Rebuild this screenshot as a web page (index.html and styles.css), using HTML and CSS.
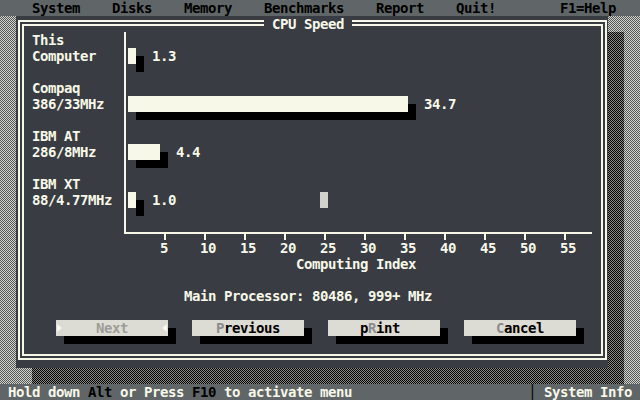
FILE: index.html
```html
<!DOCTYPE html>
<html lang="en">
<head>
<meta charset="utf-8">
<title>System Info - CPU Speed</title>
<link rel="stylesheet" href="styles.css">
</head>
<body>
<div class="screen">
  <nav class="menubar">
    <span>System</span>
    <span>Disks</span>
    <span>Memory</span>
    <span>Benchmarks</span>
    <span>Report</span>
    <span>Quit!</span>
    <span class="help">F1=Help</span>
  </nav>

  <main class="desktop">
    <section class="dialog">
      <div class="frame">
        <h1 class="title">CPU Speed</h1>

        <div class="chart">
          <div class="labels">
            <div class="label">This<br>Computer</div>
            <div class="label">Compaq<br>386/33MHz</div>
            <div class="label">IBM AT<br>286/8MHz</div>
            <div class="label">IBM XT<br>88/4.77MHz</div>
          </div>
          <div class="plot">
            <div class="series"><span class="bar" style="width:8px"></span><span class="value">1.3</span></div>
            <div class="series"><span class="bar" style="width:280px"></span><span class="value">34.7</span></div>
            <div class="series"><span class="bar" style="width:32px"></span><span class="value">4.4</span></div>
            <div class="series"><span class="bar" style="width:8px"></span><span class="value">1.0</span></div>
            <span class="mouse"></span>
          </div>
        </div>
        <div class="ticks"></div>
        <div class="scale">
          <span>5</span><span>10</span><span>15</span><span>20</span><span>25</span><span>30</span>
          <span>35</span><span>40</span><span>45</span><span>50</span><span>55</span>
        </div>
        <div class="axis-title">Computing Index</div>

        <p class="processor">Main Processor: 80486, 999+ MHz</p>

        <div class="buttons">
          <div class="btn disabled"><span class="arrow right"></span><span>Next</span><span class="arrow left"></span></div>
          <div class="btn"><span><span class="key">P</span>revious</span></div>
          <div class="btn"><span>p<span class="key">R</span>int&nbsp;</span></div>
          <div class="btn"><span><span class="key">C</span>ancel</span></div>
        </div>
      </div>
    </section>
  </main>

  <footer class="statusbar">
    <span>Hold down <span class="dark">Alt</span> or Press <span class="dark">F10</span> to activate menu</span>
    <span><span class="dark">│</span> System Info</span>
  </footer>
</div>
</body>
</html>
```

FILE: styles.css
```css
* {
  box-sizing: border-box;
  margin: 0;
  padding: 0;
}

html,
body {
  width: 640px;
  height: 400px;
  overflow: hidden;
  background: #000;
}

body {
  font-family: "DejaVu Sans Mono", "Liberation Mono", monospace;
  font-weight: bold;
  font-size: 14px;
  line-height: 16px;
  letter-spacing: -0.4287px; /* 8px character cells */
  color: #f8f8e8;
}

.screen {
  display: flex;
  flex-direction: column;
  width: 640px;
  height: 400px;
}

/* top menu line */
.menubar {
  flex: none;
  height: 16px;
  display: flex;
  gap: 32px;
  padding: 0 24px 0 32px;
  background: #606668;
  color: #000;
  white-space: pre;
}

.menubar .help {
  margin-left: auto;
}

/* shaded desktop behind the dialog */
.desktop {
  position: relative;
  z-index: 0;
  flex: 1;
  padding-left: 16px;
  background-color: #54585c;
  background-image: repeating-conic-gradient(#d2d2ca 0 25%, transparent 0 50%);
  background-size: 2px 2px;
}

.dialog {
  position: relative;
  width: 592px;
  height: 352px;
  padding: 4px 1px 8px 2px;
  background: #393c42;
}

/* drop shadow of the dialog */
.dialog::before {
  content: "";
  position: absolute;
  left: 16px;
  top: 16px;
  width: 592px;
  height: 352px;
  z-index: -1;
  background-color: #000;
  background-image: repeating-conic-gradient(#8a8a86 0 25%, transparent 0 50%);
  background-size: 2px 2px;
}

.frame {
  position: relative;
  height: 100%;
  border: 6px double #f8f8e8;
  padding: 6px 0 0 8px;
}

.title {
  position: absolute;
  top: -10px;
  left: 240px;
  padding: 0 8px;
  background: #393c42;
  font: inherit;
}

/* bar chart */
.chart {
  display: flex;
}

.labels {
  width: 92px;
  display: flex;
  flex-direction: column;
  gap: 16px;
}

.label {
  height: 32px;
  white-space: nowrap;
}

.plot {
  position: relative;
  width: 468px;
  height: 202px;
  padding-left: 2px;
  border-left: 2px solid #f8f8e8;
  border-bottom: 2px solid #f8f8e8;
  display: flex;
  flex-direction: column;
  gap: 16px;
}

.series {
  height: 32px;
  display: flex;
  align-items: flex-end;
}

.bar {
  flex: none;
  height: 16px;
  background: #f8f8e8;
  box-shadow: 8px 8px 0 #000;
}

.value {
  margin-left: 16px;
}

/* text-mode mouse cursor block */
.mouse {
  position: absolute;
  left: 194px;
  top: 160px;
  width: 8px;
  height: 16px;
  background: #d2d2cc;
}

.ticks {
  margin-left: 94px;
  width: 466px;
  height: 6px;
  background: repeating-linear-gradient(to right, transparent 0 38px, #f8f8e8 38px 40px);
}

.scale {
  display: flex;
  margin-left: 128px;
}

.scale span {
  width: 40px;
}

.axis-title {
  padding-left: 264px;
}

.processor {
  margin-top: 16px;
  padding-left: 152px;
}

/* push buttons */
.buttons {
  display: flex;
  gap: 24px;
  margin-top: 16px;
  margin-left: 24px;
}

.btn {
  width: 112px;
  height: 16px;
  display: flex;
  justify-content: center;
  background: #dcdcd4;
  color: #000;
  box-shadow: 8px 8px 0 #000;
  white-space: pre;
}

.btn .key {
  color: #8c8c8c;
}

.btn.disabled {
  justify-content: space-between;
  align-items: center;
  color: #9c9c98;
}

.arrow {
  width: 0;
  height: 0;
  border-top: 4px solid transparent;
  border-bottom: 4px solid transparent;
}

.arrow.right {
  margin-left: 1px;
  border-left: 5px solid #f8f8f0;
}

.arrow.left {
  margin-right: 1px;
  border-right: 5px solid #f8f8f0;
}

/* bottom hint line */
.statusbar {
  flex: none;
  height: 16px;
  display: flex;
  justify-content: space-between;
  padding: 0 8px;
  background: #606668;
  color: #f8f8e8;
  white-space: pre;
}

.statusbar .dark {
  color: #000;
}
```
